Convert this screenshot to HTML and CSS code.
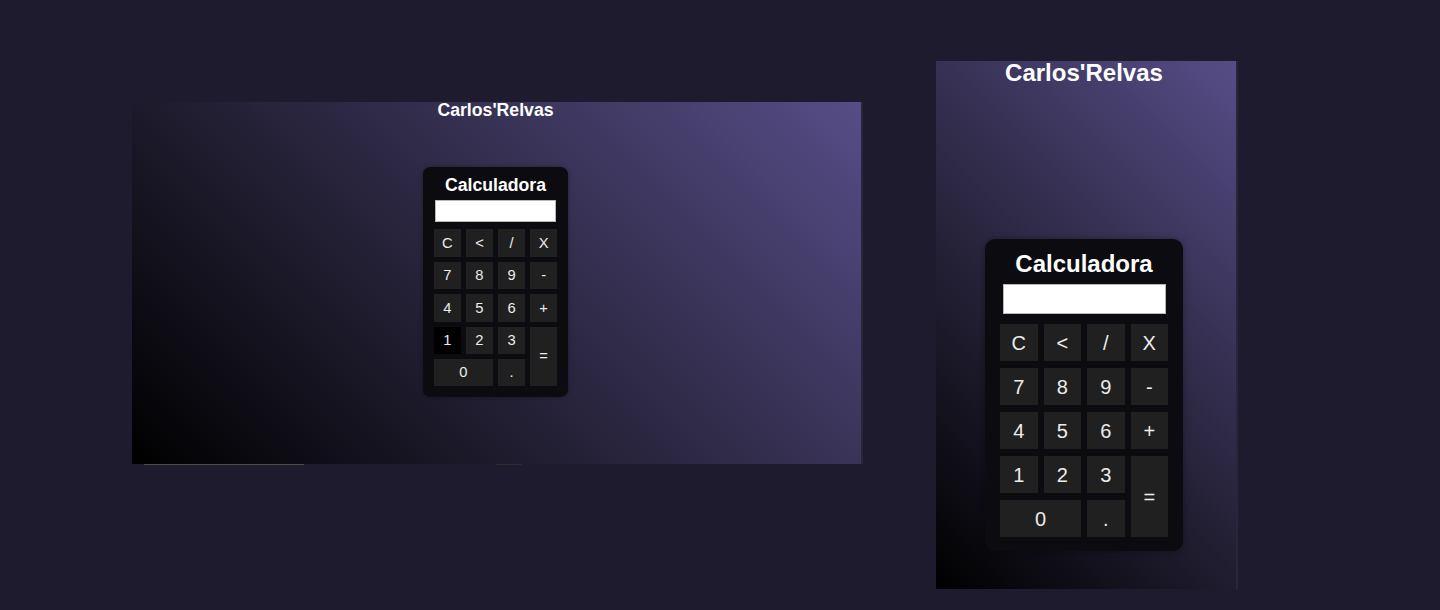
FILE: index.html
```html
<!DOCTYPE html>
<html lang="pt">
<head>
<meta charset="utf-8">
<title>Carlos'Relvas - Calculadora</title>
<link rel="stylesheet" href="styles.css">
</head>
<body>
<main class="stage">
  <section class="device device-wide">
    <div class="viewport viewport-wide">
      <h1 class="brand">Carlos'Relvas</h1>
      <div class="calc">
        <h2 class="calc-title">Calculadora</h2>
        <input class="display" type="text" aria-label="visor">
        <div class="keys">
          <button class="key">C</button>
          <button class="key">&lt;</button>
          <button class="key">/</button>
          <button class="key">X</button>
          <button class="key">7</button>
          <button class="key">8</button>
          <button class="key">9</button>
          <button class="key">-</button>
          <button class="key">4</button>
          <button class="key">5</button>
          <button class="key">6</button>
          <button class="key">+</button>
          <button class="key key-hover">1</button>
          <button class="key">2</button>
          <button class="key">3</button>
          <button class="key key-eq">=</button>
          <button class="key key-zero">0</button>
          <button class="key">.</button>
        </div>
      </div>
    </div>
    <div class="track">
      <span class="thumb thumb-a"></span>
      <span class="thumb thumb-b"></span>
    </div>
  </section>

  <section class="device device-tall">
    <div class="viewport viewport-tall">
      <h1 class="brand">Carlos'Relvas</h1>
      <div class="calc">
        <h2 class="calc-title">Calculadora</h2>
        <input class="display" type="text" aria-label="visor">
        <div class="keys">
          <button class="key">C</button>
          <button class="key">&lt;</button>
          <button class="key">/</button>
          <button class="key">X</button>
          <button class="key">7</button>
          <button class="key">8</button>
          <button class="key">9</button>
          <button class="key">-</button>
          <button class="key">4</button>
          <button class="key">5</button>
          <button class="key">6</button>
          <button class="key">+</button>
          <button class="key">1</button>
          <button class="key">2</button>
          <button class="key">3</button>
          <button class="key key-eq">=</button>
          <button class="key key-zero">0</button>
          <button class="key">.</button>
        </div>
      </div>
    </div>
  </section>
</main>
</body>
</html>
```

FILE: styles.css
```css
* {
  box-sizing: border-box;
}

html, body {
  margin: 0;
  padding: 0;
}

body {
  background: #1e1b2e;
  font-family: "Liberation Sans", Arial, sans-serif;
  height: 610px;
  overflow: hidden;
}

.stage {
  display: flex;
  align-items: flex-start;
  padding-left: 132px;
  gap: 73px;
}

.device {
  display: flex;
  flex-direction: column;
}

.device-wide {
  margin-top: 102px;
  --u: 0.737px;
}

.device-tall {
  margin-top: 61px;
  --u: 1px;
}

.viewport {
  display: flex;
  flex-direction: column;
  align-items: center;
  background: linear-gradient(45deg, #000 0%, #2b2741 50%, #564d87 100%);
  border-right: 2px solid #29263c;
}

.viewport-wide {
  width: 731px;
  height: 362px;
  padding-right: 2px;
}

.viewport-tall {
  width: 302px;
  height: 528px;
  padding-right: 4px;
}

.brand {
  margin: 0;
  color: #fff;
  font-size: calc(24 * var(--u));
  line-height: 1;
  font-weight: bold;
}

.viewport-wide .calc {
  margin-top: calc(64 * var(--u));
}

.viewport-tall .calc {
  margin-top: 154px;
}

.calc {
  width: calc(198 * var(--u));
  background: #0c0b10;
  border-radius: calc(10 * var(--u));
  padding: calc(11 * var(--u)) calc(15 * var(--u)) calc(14 * var(--u));
  display: flex;
  flex-direction: column;
  align-items: center;
  box-shadow: 0 0 calc(6 * var(--u)) rgba(0, 0, 0, 0.35);
}

.calc-title {
  margin: 0;
  color: #fff;
  font-size: calc(24 * var(--u));
  line-height: calc(28 * var(--u));
  font-weight: bold;
}

.display {
  display: block;
  margin: calc(6 * var(--u)) 0 0;
  width: calc(163 * var(--u));
  height: calc(30 * var(--u));
  background: #fff;
  border: 1px solid #b9b9b9;
  padding: 0;
  font: inherit;
}

.keys {
  margin-top: calc(10 * var(--u));
  width: 100%;
  display: grid;
  grid-template-columns: repeat(4, 1fr);
  grid-auto-rows: calc(37 * var(--u));
  column-gap: calc(6 * var(--u));
  row-gap: calc(7 * var(--u));
}

.key {
  background: #202020;
  color: #ececec;
  border: none;
  padding: 0;
  margin: 0;
  font-family: "Liberation Sans", Arial, sans-serif;
  font-size: calc(20 * var(--u));
  line-height: 1;
}

.key-hover {
  background: #000;
}

.key-eq {
  grid-column: 4;
  grid-row: 4 / span 2;
}

.key-zero {
  grid-column: 1 / span 2;
}

.track {
  width: 731px;
  height: 2px;
  display: flex;
  align-items: flex-start;
}

.thumb {
  height: 1px;
  display: block;
}

.thumb-a {
  margin-left: 12px;
  width: 160px;
  background: #4b4e4c;
}

.thumb-b {
  margin-left: 192px;
  width: 26px;
  background: #2a2e31;
}
```
